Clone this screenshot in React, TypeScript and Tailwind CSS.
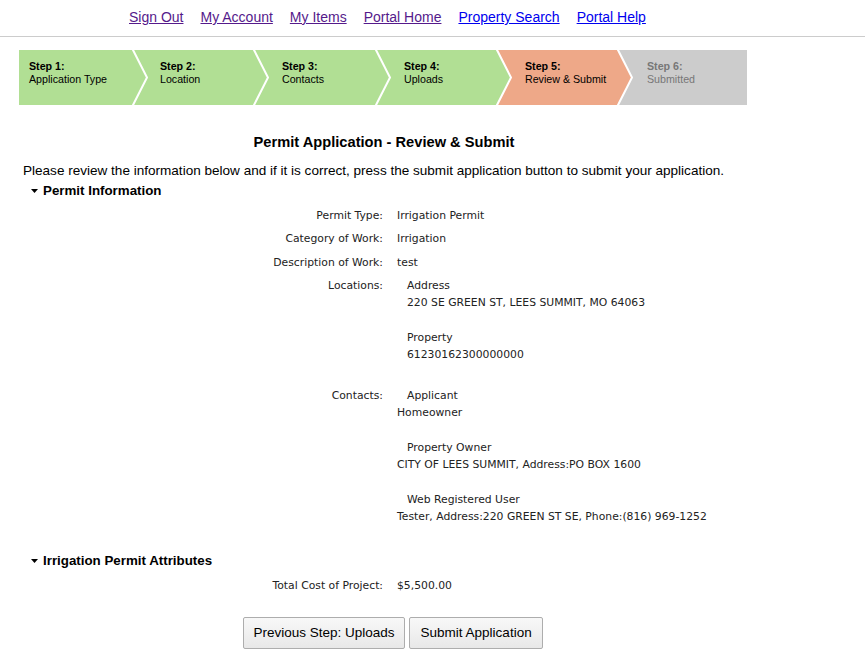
import React from "react";

type Step = { n: number; label: string; fill: string; bg: string; width: string; pad: string; text: string };

const STEPS: Step[] = [
  { n: 1, label: "Application Type", fill: "#B1DF94", bg: "bg-[#B1DF94]", width: "w-[114px]", pad: "pl-[10px]", text: "text-black" },
  { n: 2, label: "Location", fill: "#B1DF94", bg: "bg-[#B1DF94]", width: "w-[121px]", pad: "pl-[27px]", text: "text-black" },
  { n: 3, label: "Contacts", fill: "#B1DF94", bg: "bg-[#B1DF94]", width: "w-[122px]", pad: "pl-[28px]", text: "text-black" },
  { n: 4, label: "Uploads", fill: "#B1DF94", bg: "bg-[#B1DF94]", width: "w-[121px]", pad: "pl-[28px]", text: "text-black" },
  { n: 5, label: "Review & Submit", fill: "#EEA888", bg: "bg-[#EEA888]", width: "w-[121px]", pad: "pl-[28px]", text: "text-black" },
  { n: 6, label: "Submitted", fill: "#CCCCCC", bg: "bg-[#CCCCCC]", width: "w-[129px]", pad: "pl-[29px]", text: "text-[#777777]" },
];

const NAV = [
  { label: "Sign Out", visited: true },
  { label: "My Account", visited: true },
  { label: "My Items", visited: true },
  { label: "Portal Home", visited: true },
  { label: "Property Search", visited: false },
  { label: "Portal Help", visited: false },
];

const arial = "font-['Liberation_Sans',Arial,sans-serif]";
const verdana = "font-['DejaVu_Sans',Verdana,sans-serif]";

function StepBar() {
  return (
    <div className="ml-[19px] mt-[13px] flex h-[55px]">
      {STEPS.map((s, i) => (
        <div key={s.n} className={`relative h-full ${s.width} ${s.bg} ${s.pad} pt-[10px] ${s.text} text-[10.67px] leading-[13px] ${arial}`}>
          <div className="relative z-20 font-bold">Step {s.n}:</div>
          <div className="relative z-20">{s.label}</div>
          {i < STEPS.length - 1 && (
            <svg className="absolute top-0 left-full z-10 -ml-[1px] overflow-visible" width="17" height="55" viewBox="0 0 17 55">
              <polygon points="0,0 15,27.5 0,55" fill={s.fill} />
              <polyline points="0.5,-1 15,27.5 0.5,56" fill="none" stroke="#ffffff" strokeWidth="2" />
            </svg>
          )}
        </div>
      ))}
    </div>
  );
}

function Caret() {
  return (
    <svg width="7" height="4" viewBox="0 0 7 4" className="shrink-0">
      <polygon points="0,0 7,0 3.5,4" fill="#000" />
    </svg>
  );
}

function SectionHeading({ children }: { children: React.ReactNode }) {
  return (
    <div className={`ml-[31px] flex h-[16px] items-center gap-[5px] text-[13.33px] font-bold text-black ${arial}`}>
      <Caret />
      <span>{children}</span>
    </div>
  );
}

function Row({ label, children }: { label: string; children: React.ReactNode }) {
  return (
    <div className={`flex py-[3px] text-[10.8px] leading-[17.33px] text-[#222] ${verdana}`}>
      <div className="w-[383px] shrink-0 text-right">{label}</div>
      <div className="pl-[14px]">{children}</div>
    </div>
  );
}

export default function App() {
  return (
    <div className="min-h-screen bg-white">
      <div className="h-[37px] border-b border-[#cccccc]">
        <nav className={`ml-[129px] flex gap-[17px] pt-[8px] text-[14px] leading-[18px] ${arial}`}>
          {NAV.map((l) => (
            <a key={l.label} href="#" className={`underline ${l.visited ? "text-[#551A8B]" : "text-[#0000EE]"}`}>
              {l.label}
            </a>
          ))}
        </nav>
      </div>

      <StepBar />

      <div className="w-[768px]">
        <h1 className={`mt-[29px] text-center text-[14.67px] font-bold leading-[17px] text-black ${arial}`}>
          Permit Application - Review &amp; Submit
        </h1>
        <p className={`mt-[12px] ml-[23px] whitespace-nowrap text-[13.55px] leading-[16px] text-black ${arial}`}>
          Please review the information below and if it is correct, press the submit application button to submit your application.
        </p>

        <div className="mt-[4px]">
          <SectionHeading>Permit Information</SectionHeading>
          <div className="mt-[5px]">
            <Row label="Permit Type:">Irrigation Permit</Row>
            <Row label="Category of Work:">Irrigation</Row>
            <Row label="Description of Work:">test</Row>
            <Row label="Locations:">
              <div className="pl-[10px]">
                <div>Address</div>
                <div>220 SE GREEN ST, LEES SUMMIT, MO 64063</div>
                <div>&nbsp;</div>
                <div>Property</div>
                <div>61230162300000000</div>
                <div>&nbsp;</div>
              </div>
            </Row>
            <Row label="Contacts:">
              <div className="pl-[10px]">Applicant</div>
              <div>Homeowner</div>
              <div>&nbsp;</div>
              <div className="pl-[10px]">Property Owner</div>
              <div>CITY OF LEES SUMMIT, Address:PO BOX 1600</div>
              <div>&nbsp;</div>
              <div className="pl-[10px]">Web Registered User</div>
              <div>Tester, Address:220 GREEN ST SE, Phone:(816) 969-1252</div>
            </Row>
          </div>
        </div>

        <div className="mt-[24px]">
          <SectionHeading>Irrigation Permit Attributes</SectionHeading>
          <div className="mt-[5px]">
            <Row label="Total Cost of Project:">$5,500.00</Row>
          </div>
        </div>

        <div className={`mt-[20px] ml-[243px] flex gap-[4px] text-[13.5px] text-black ${arial}`}>
          <button className="h-[32px] rounded-[2px] border border-[#adadad] bg-gradient-to-b from-[#f8f8f8] to-[#e8e8e8] px-[9.5px]">
            Previous Step: Uploads
          </button>
          <button className="h-[32px] rounded-[2px] border border-[#adadad] bg-gradient-to-b from-[#f8f8f8] to-[#e8e8e8] px-[10.5px]">
            Submit Application
          </button>
        </div>
      </div>
    </div>
  );
}
